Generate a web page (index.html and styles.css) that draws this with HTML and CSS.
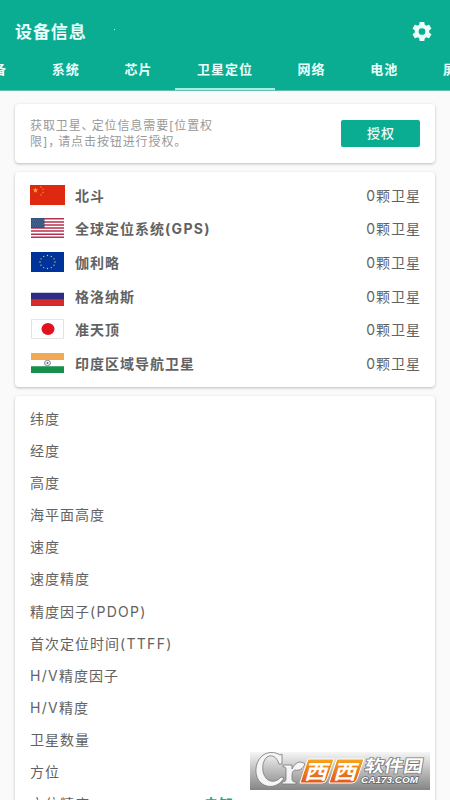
FILE: index.html
```html
<!DOCTYPE html>
<html lang="zh-CN">
<head>
<meta charset="utf-8">
<title>设备信息</title>
<link rel="stylesheet" href="styles.css">
</head>
<body>
<header class="header">
  <div class="bar">
    <h1 class="title">设备信息</h1>
    <i class="speck"></i>
    <svg class="gear" viewBox="0 0 24 24"><path d="M19.43 12.98c.04-.32.07-.64.07-.98s-.03-.66-.07-.98l2.11-1.65c.19-.15.24-.42.12-.64l-2-3.46c-.12-.22-.39-.3-.61-.22l-2.49 1c-.52-.4-1.08-.73-1.69-.98l-.38-2.65A.49.49 0 0 0 14 2h-4c-.25 0-.46.18-.49.42l-.38 2.65c-.61.25-1.17.59-1.69.98l-2.49-1c-.23-.09-.49 0-.61.22l-2 3.46c-.13.22-.07.49.12.64l2.11 1.65c-.04.32-.07.65-.07.98s.03.66.07.98l-2.11 1.65c-.19.15-.24.42-.12.64l2 3.46c.12.22.39.3.61.22l2.49-1c.52.4 1.08.73 1.69.98l.38 2.65c.03.24.24.42.49.42h4c.25 0 .46-.18.49-.42l.38-2.65c.61-.25 1.17-.59 1.69-.98l2.49 1c.23.09.49 0 .61-.22l2-3.46c.12-.22.07-.49-.12-.64l-2.11-1.65zM12 15.500a3.500 3.500 0 1 1 0-7 3.500 3.500 0 0 1 0 7z"/></svg>
  </div>
  <nav class="tabs">
    <span class="tab">设备</span><span class="tab">系统</span><span class="tab">芯片</span><span class="tab active">卫星定位</span><span class="tab">网络</span><span class="tab">电池</span><span class="tab">屏幕</span>
  </nav>
</header>
<main class="content">
  <section class="card permission">
    <p class="hint">获取卫星<span class="punct">、</span>定位信息需要[位置权<br>限]<span class="punct">，</span>请点击按钮进行授权。</p>
    <button class="grant">授权</button>
  </section>
  <section class="card systems">
    <div class="system">
      <svg class="flag" viewBox="0 0 35 20" preserveAspectRatio="none"><path fill="#de2910" d="M0 0h35v20H0z"/><path fill="#ffb22e" d="m5.500 2.500.7 2h2.100l-1.700 1.300.6 2-1.700-1.200-1.700 1.200.6-2-1.700-1.300h2.100z"/><g fill="#f59b29"><circle cx="11" cy="2" r=".65"/><circle cx="13" cy="4.200" r=".65"/><circle cx="13" cy="7.500" r=".65"/><circle cx="11" cy="10" r=".65"/></g></svg>
      <span class="name">北斗</span><span class="count">0颗卫星</span>
    </div>
    <div class="system">
      <svg class="flag" viewBox="0 0 35 20" preserveAspectRatio="none"><path fill="#fff" d="M1 0h33v20H1z"/><path stroke="#b6304f" stroke-width="1.500" d="M1 .8h33M1 3.900h33M1 6.900h33M1 10h33M1 13.100h33M1 16.200h33M1 19.200h33"/><path fill="#31527f" d="M1 0h13.500v10H1z"/><path stroke="#8fa5bd" stroke-width=".7" stroke-dasharray=".8 1.400" d="M2 2h12M3 4h11M2 6h12M3 8h11"/></svg>
      <span class="name">全球定位系统<span class="latin">(GPS)</span></span><span class="count">0颗卫星</span>
    </div>
    <div class="system">
      <svg class="flag" viewBox="0 0 35 20" preserveAspectRatio="none"><path fill="#039" d="M1 0h33v20H1z"/><g fill="#e8d64b"><circle cx="17.500" cy="3.500" r=".65"/><circle cx="21.300" cy="4.400" r=".65"/><circle cx="24" cy="6.800" r=".65"/><circle cx="25" cy="10" r=".65"/><circle cx="24" cy="13.200" r=".65"/><circle cx="21.300" cy="15.600" r=".65"/><circle cx="17.500" cy="16.500" r=".65"/><circle cx="13.700" cy="15.600" r=".65"/><circle cx="11" cy="13.200" r=".65"/><circle cx="10" cy="10" r=".65"/><circle cx="11" cy="6.800" r=".65"/><circle cx="13.700" cy="4.400" r=".65"/></g></svg>
      <span class="name">伽利略</span><span class="count">0颗卫星</span>
    </div>
    <div class="system">
      <svg class="flag" viewBox="0 0 35 20" preserveAspectRatio="none"><path fill="#fff" d="M1 0h33v7H1z"/><path fill="#2d2e83" d="M1 6.700h33V14H1z"/><path fill="#d62b2b" d="M1 13.300h33V20H1z"/></svg>
      <span class="name">格洛纳斯</span><span class="count">0颗卫星</span>
    </div>
    <div class="system">
      <svg class="flag" viewBox="0 0 35 20" preserveAspectRatio="none"><path fill="#fff" stroke="#d4d9d9" stroke-width=".7" d="M1.500.4h32v19.200h-32z"/><ellipse fill="#e3111d" cx="18" cy="10" rx="6.500" ry="6"/></svg>
      <span class="name">准天顶</span><span class="count">0颗卫星</span>
    </div>
    <div class="system">
      <svg class="flag" viewBox="0 0 35 20" preserveAspectRatio="none"><path fill="#f0aa55" d="M1 0h33v7H1z"/><path fill="#fff" d="M1 7h33v6.500H1z"/><path fill="#15914a" d="M1 13.300h33V20H1z"/><ellipse cx="17.500" cy="10" rx="2.900" ry="2.600" fill="none" stroke="#647087" stroke-width=".9"/><circle cx="17.500" cy="10" r="1" fill="#526080"/></svg>
      <span class="name">印度区域导航卫星</span><span class="count">0颗卫星</span>
    </div>
  </section>
  <section class="card details">
    <div class="row">纬度</div>
    <div class="row">经度</div>
    <div class="row">高度</div>
    <div class="row">海平面高度</div>
    <div class="row">速度</div>
    <div class="row">速度精度</div>
    <div class="row">精度因子<span class="latin">(PDOP)</span></div>
    <div class="row">首次定位时间<span class="latin">(TTFF)</span></div>
    <div class="row"><span class="latin">H/V</span>精度因子</div>
    <div class="row"><span class="latin">H/V</span>精度</div>
    <div class="row">卫星数量</div>
    <div class="row">方位</div>
    <div class="row"><span class="label">方位精度</span><span class="value">未知</span></div>
  </section>
</main>
<svg class="watermark" viewBox="0 0 180 38">
  <defs>
    <linearGradient id="plate" x2="0" y2="1"><stop stop-color="#f6f6f6"/><stop offset=".5" stop-color="#bcbcbc"/><stop offset="1" stop-color="#858585"/></linearGradient>
    <linearGradient id="orange" x2="0" y2="1"><stop stop-color="#f7a51c"/><stop offset="1" stop-color="#e4571b"/></linearGradient>
  </defs>
  <path fill="url(#plate)" d="M0 0h180v38H0z"/>
  <g fill="#f5f5f5" stroke="#777" stroke-width=".8">
    <path d="M30 3C25-.5 17-.5 12 4 4 11 4 25 11 31c7 6 18 4 23-5l-3-1c-4 5-11 6-15 1-5-6-4-17 1-21 5-3 10 0 12 7h3V2z"/>
    <path d="M33 13h9v4c2-4 4-6 7-7 3 0 5 1 6 2-2 5-6 7-10 6-3 1-3 4-3 7v2c0 2 1 3 4 3v2H32v-2c3 0 4-1 4-3V17c0-2-1-2-3-2z"/>
  </g>
  <path fill="url(#orange)" stroke="#fff" stroke-width="1" d="M58 7h26l-7 20q-1 4-5 4H50z"/>
  <path fill="url(#orange)" stroke="#fff" stroke-width="1" d="M87 7h27l-7 20q-1 4-5 4H79z"/>
  <text class="brand" transform="translate(54 26.500) skewX(-16)" textLength="23" lengthAdjust="spacingAndGlyphs">西</text>
  <text class="brand" transform="translate(83 26.500) skewX(-16)" textLength="23" lengthAdjust="spacingAndGlyphs">西</text>
  <text class="park" transform="translate(114 20) skewX(-10)" textLength="58" lengthAdjust="spacingAndGlyphs">软件园</text>
  <text class="domain" x="111" y="31" textLength="57" lengthAdjust="spacingAndGlyphs">CA173.COM</text>
</svg>
</body>
</html>
```
FILE: styles.css
```css
* { box-sizing: border-box; }

body {
  margin: 0;
  height: 800px;
  overflow: hidden;
  position: relative;
  background: #fafafa;
  color: #626262;
  font-family: Inter, "Noto Sans CJK SC", sans-serif;
}

.header {
  height: 91px;
  background: #0aad92;
  border-bottom: 1px solid #62bfae;
  color: #eafffb;
  overflow: hidden;
}

.bar {
  height: 49px;
  padding: 14px 16px 0 15px;
  display: flex;
  align-items: center;
}

.title {
  margin: 0;
  font-size: 17px;
  line-height: 24px;
  letter-spacing: .9px;
  font-weight: 700;
}

.speck {
  width: 1px;
  height: 1px;
  margin: -5px 0 0 27px;
  background: #bff5e8;
}

.gear {
  width: 24px;
  height: 23px;
  margin-left: auto;
  fill: #eafffb;
}

.tabs {
  display: flex;
  height: 41px;
  margin-left: -43.400px;
}

.tab {
  flex: 0 0 72.800px;
  text-align: center;
  font-size: 13px;
  line-height: 41px;
  letter-spacing: 1px;
  font-weight: 700;
}

.tab.active {
  flex-basis: 100px;
  border-bottom: 2px solid #a5eee1;
}

.content {
  display: flex;
  flex-direction: column;
  gap: 9px;
  padding: 13px 15px 0;
}

.card {
  background: #fff;
  border-radius: 4px;
  box-shadow: 0 1px 3px rgba(0, 0, 0, .25);
}

.permission {
  height: 59px;
  display: flex;
  align-items: center;
  justify-content: space-between;
  padding: 0 15px;
}

.hint {
  margin: 0;
  color: #999;
  font-size: 12px;
  line-height: 15.500px;
  letter-spacing: .9px;
  white-space: nowrap;
}

.punct { letter-spacing: -2px; }

.grant {
  width: 79px;
  height: 27px;
  padding: 0 0 0 1px;
  border: 0;
  border-radius: 2px;
  background: #0aad92;
  color: #f0fffc;
  font: 500 13px/27px Inter, "Noto Sans CJK SC", sans-serif;
  letter-spacing: 1px;
}

.systems {
  height: 215px;
  padding: 6px 15px;
}

.system {
  display: flex;
  align-items: center;
  height: 33.600px;
  font-size: 14px;
  letter-spacing: 1px;
}

.flag {
  width: 35px;
  height: 20px;
}

.name {
  margin-left: 10px;
  font-weight: 700;
}

.count {
  margin: 0 -1px 0 auto;
}

.details {
  padding: 7px 15px;
}

.row {
  display: flex;
  height: 32.100px;
  line-height: 32px;
  font-size: 14px;
  letter-spacing: 1px;
}

.latin { letter-spacing: 1.300px; }

.label { width: 174px; }

.value {
  color: #0aad92;
  font-weight: 700;
}

.watermark {
  position: absolute;
  left: 250px;
  top: 752px;
  width: 180px;
  height: 38px;
}

.brand {
  fill: #fff;
  font: 700 20px "Noto Sans CJK SC", sans-serif;
}

.park {
  fill: #fff;
  stroke: #777;
  stroke-width: 1.500px;
  paint-order: stroke;
  font: 700 17px "Noto Sans CJK SC", sans-serif;
}

.domain {
  fill: #fff;
  stroke: #666;
  stroke-width: 1.500px;
  paint-order: stroke;
  font: italic 700 9.500px "Liberation Sans", sans-serif;
}
```
